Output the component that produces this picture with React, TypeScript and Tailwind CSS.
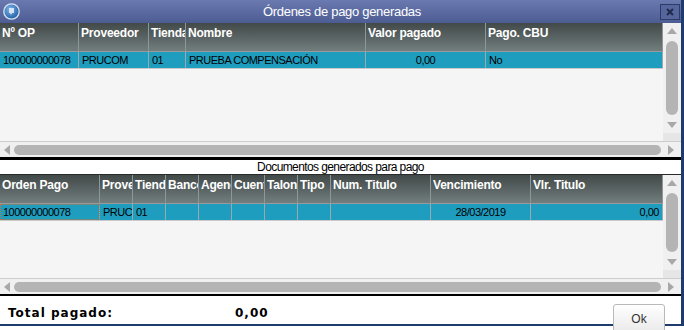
import React from "react";

type Col = { title: string; value?: string; align?: "left" | "center" | "right"; focus?: boolean };

const ordenes: Col[] = [
  { title: "Nº OP", value: "100000000078" },
  { title: "Proveedor", value: "PRUCOM" },
  { title: "Tienda", value: "01" },
  { title: "Nombre", value: "PRUEBA COMPENSACIÓN" },
  { title: "Valor pagado", value: "0,00", align: "center" },
  { title: "Pago. CBU", value: "No" },
];

const documentos: Col[] = [
  { title: "Orden Pago", value: "100000000078", focus: true },
  { title: "Proveedor", value: "PRUCOM" },
  { title: "Tienda", value: "01" },
  { title: "Banco" },
  { title: "Agencia" },
  { title: "Cuenta" },
  { title: "Talon" },
  { title: "Tipo" },
  { title: "Num. Titulo" },
  { title: "Vencimiento", value: "28/03/2019", align: "center" },
  { title: "Vlr. Titulo", value: "0,00", align: "right" },
];

const alignClass = {
  left: "text-left pl-[3px]",
  center: "text-center",
  right: "text-right pr-[3px]",
};

const Arrow = ({ dir }: { dir: "up" | "down" | "left" | "right" }) => {
  const pts = {
    up: "0,6 5,0 10,6",
    down: "0,0 10,0 5,6",
    left: "6,0 6,10 0,5",
    right: "0,0 0,10 6,5",
  }[dir];
  const vertical = dir === "up" || dir === "down";
  return (
    <svg width={vertical ? 10 : 6} height={vertical ? 6 : 10} viewBox={vertical ? "0 0 10 6" : "0 0 6 10"}>
      <polygon points={pts} fill="#a8a8a8" />
    </svg>
  );
};

const VScroll = () => (
  <div className="w-[18px] shrink-0 bg-[#f0f0f0] flex flex-col">
    <div className="h-[16px] flex items-center justify-center">
      <Arrow dir="up" />
    </div>
    <div className="flex-1 px-[3px] py-[2px]">
      <div className="h-full rounded-full bg-[#b4b4b4]" />
    </div>
    <div className="h-[16px] flex items-center justify-center">
      <Arrow dir="down" />
    </div>
    <div className="h-[8px] bg-[#e6e6e6]" />
  </div>
);

const HScroll = () => (
  <div className="h-[16px] shrink-0 bg-[#f0f0f0] border-t border-[#cdcdcd] flex items-center">
    <div className="w-[14px] flex justify-center">
      <Arrow dir="left" />
    </div>
    <div className="flex-1 h-[10px] rounded-full bg-[#b4b4b4]" />
    <div className="w-[20px] flex justify-center">
      <Arrow dir="right" />
    </div>
  </div>
);

const Table = ({ cols, template }: { cols: Col[]; template: string }) => (
  <div className="flex flex-1 min-h-0">
    <div className="w-[663px] bg-[#f5f5f5] flex flex-col">
      <div className={`grid ${template} h-[29px] bg-gradient-to-b from-[#424949] to-[#727e7e] border-b border-[#9a9a9a]`}>
        {cols.map((c) => (
          <div
            key={c.title}
            className="overflow-hidden whitespace-nowrap border-r border-[#8e9797] pl-[2px] pt-[3px] text-[12px] leading-[14px] tracking-[-0.2px] font-bold text-white"
          >
            {c.title}
          </div>
        ))}
      </div>
      <div className={`grid ${template} h-[17px] bg-[#1f9dbf] border-b border-[#c9c9c9]`}>
        {cols.map((c) => (
          <div
            key={c.title}
            className={`overflow-hidden whitespace-nowrap border-r border-[#9aa9ae] text-[11px] leading-[16px] tracking-[-0.5px] text-black ${alignClass[c.align ?? "left"]} ${
              c.focus ? "outline outline-1 outline-dotted outline-[#c8733c] -outline-offset-1" : ""
            }`}
          >
            {c.value ?? ""}
          </div>
        ))}
      </div>
    </div>
    <VScroll />
  </div>
);

export default function App() {
  return (
    <div className="relative w-[684px] h-[330px] bg-white overflow-hidden font-['Liberation_Sans',Arial,sans-serif]">
      <div className="h-[326px] border-r-[3px] border-b-2 border-[#1d3b6c] flex flex-col">
        <div className="h-[23px] shrink-0 bg-gradient-to-b from-[#6a7ab0] to-[#4d5c92] flex items-center">
          <svg className="ml-[3px]" width="17" height="17" viewBox="0 0 17 17">
            <defs>
              <radialGradient id="ic" cx="0.4" cy="0.35" r="0.7">
                <stop offset="0" stopColor="#7fb2e6" />
                <stop offset="1" stopColor="#1d5aa0" />
              </radialGradient>
            </defs>
            <circle cx="8.5" cy="8.5" r="7.7" fill="url(#ic)" stroke="#d5e2f3" strokeWidth="1.3" />
            <path d="M6 5 h5 v5 h-2 l-1 2 l-1 -2 h-1 z" fill="#e8f0fa" opacity="0.85" />
          </svg>
          <div className="flex-1 text-center text-white text-[13px] tracking-[-0.3px] leading-none pl-[4px]">Órdenes de pago generadas</div>
          <div className="mr-[1px] w-[20px] h-[16px] border border-[#2c3b68] bg-[#56669d] flex items-center justify-center">
            <svg width="8" height="8" viewBox="0 0 8 8">
              <path d="M1 1 L7 7 M7 1 L1 7" stroke="#1f2a4a" strokeWidth="2" />
            </svg>
          </div>
        </div>

        <div className="h-[118px] shrink-0 flex flex-col">
          <Table cols={ordenes} template="grid-cols-[79px_70px_37px_180px_120px_177px]" />
        </div>
        <HScroll />
        <div className="h-[3px] shrink-0 bg-black" />

        <div className="h-[14px] shrink-0 text-center text-[12px] leading-[14px] tracking-[-0.6px] text-black">
          Documentos generados para pago
        </div>

        <div className="h-[104px] shrink-0 flex flex-col border-t border-[#2a2a2a]">
          <Table
            cols={documentos}
            template="grid-cols-[100px_33px_33px_33px_33px_33px_33px_33px_100px_100px_132px]"
          />
        </div>
        <HScroll />
        <div className="h-[2px] shrink-0 bg-black" />

        <div className="flex-1 flex items-center font-['DejaVu_Sans',sans-serif] font-bold text-[12px] tracking-[1px] text-black pt-[6px]">
          <span className="pl-[8px] w-[235px]">Total pagado:</span>
          <span>0,00</span>
        </div>
      </div>

      <button className="absolute left-[613px] top-[304px] w-[52px] h-[30px] rounded-[3px] border border-[#b9b9b9] bg-gradient-to-b from-white to-[#e9e9e9] text-[12px] text-[#333] font-['Liberation_Sans',sans-serif]">
        Ok
      </button>
    </div>
  );
}
